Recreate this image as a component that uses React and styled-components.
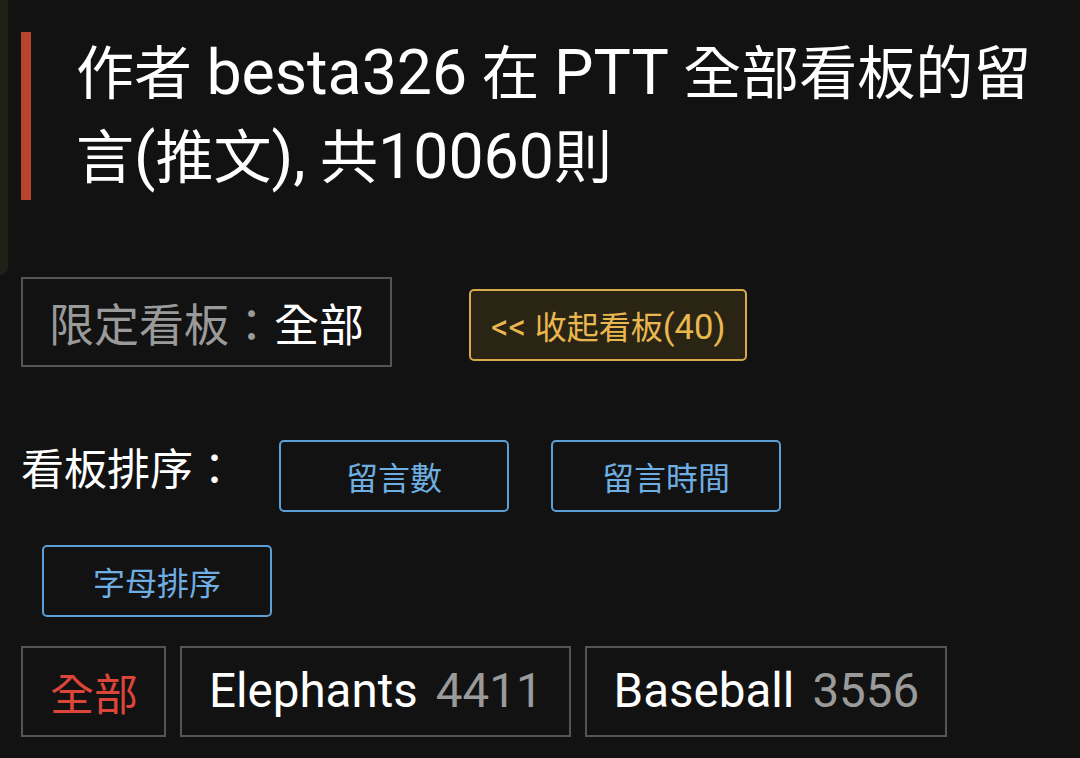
import React from 'react';
import styled, { createGlobalStyle } from 'styled-components';

const GlobalStyle = createGlobalStyle`
  html, body {
    margin: 0;
    padding: 0;
    background: #121212;
  }
  body {
    font-family: Roboto, "Noto Sans CJK TC", "Noto Sans", sans-serif;
    color: #fff;
  }
`;

const Page = styled.div`
  position: relative;
  min-height: 758px;
  padding: 32px 21px 0 21px;
  box-sizing: border-box;
`;

// drawer edge peeking in from the left
const DrawerEdge = styled.div`
  position: absolute;
  top: 0;
  left: 0;
  width: 8px;
  height: 275px;
  background: #202017;
  border-bottom-right-radius: 8px;
`;

// latin runs render a bit larger than the CJK glyphs next to them
const Latin = styled.span`
  font-size: 1.08em;
  line-height: 1;
`;

const Heading = styled.h1`
  margin: 0;
  border-left: 10px solid #b8452b;
  padding-left: 45px;
  font-size: 58px;
  font-weight: 400;
  line-height: 84px;
  color: #fff;
`;

const FilterRow = styled.div`
  display: flex;
  align-items: flex-start;
  gap: 77px;
  margin-top: 77px;
`;

const FilterBox = styled.div`
  display: flex;
  align-items: center;
  height: 90px;
  box-sizing: border-box;
  padding: 0 26px;
  border: 2px solid #555;
  font-size: 45px;
  color: #9a9a9a;
`;

const FilterValue = styled.span`
  color: #fff;
`;

const CollapseButton = styled.button`
  margin-top: 12px;
  height: 72px;
  padding: 0 20px;
  border: 2px solid #d9aa4b;
  border-radius: 5px;
  background: #2a2415;
  color: #e9b74f;
  font-family: inherit;
  font-size: 32px;
  cursor: pointer;
`;

const SortSection = styled.div`
  display: flex;
  flex-wrap: wrap;
  align-items: center;
  row-gap: 33px;
  margin-top: 73px;
`;

const SortLabel = styled.span`
  font-size: 43px;
  line-height: 1.2;
  color: #fff;
  margin: 0 22px 10px 0;
`;

const SortButton = styled.button`
  width: 230px;
  height: 72px;
  margin: 0 21px;
  border: 2px solid #5b9fd6;
  border-radius: 5px;
  background: transparent;
  color: #6eaee2;
  font-family: inherit;
  font-size: 32px;
  cursor: pointer;
`;

const Tabs = styled.div`
  display: flex;
  gap: 14px;
  margin-top: 29px;
`;

const Tab = styled.div`
  display: flex;
  align-items: center;
  height: 91px;
  box-sizing: border-box;
  padding: 0 26px 0 27px;
  border: 2px solid #555;
  font-size: 44px;
  color: ${({ active }) => (active ? '#dc453a' : '#fff')};
`;

const Count = styled(Latin)`
  margin-left: 18px;
  color: #9a9a9a;
`;

const boards = [
  { name: 'Elephants', count: 4411 },
  { name: 'Baseball', count: 3556 },
];

const App = () => (
  <Page>
    <GlobalStyle />
    <DrawerEdge />
    <Heading>
      作者 <Latin>besta326</Latin> 在 <Latin>PTT</Latin> 全部看板的留言<Latin>(</Latin>推文
      <Latin>),</Latin> 共<Latin>10060</Latin>則
    </Heading>

    <FilterRow>
      <FilterBox>
        限定看板：<FilterValue>全部</FilterValue>
      </FilterBox>
      <CollapseButton>
        <Latin>&lt;&lt; </Latin>收起看板<Latin>(40)</Latin>
      </CollapseButton>
    </FilterRow>

    <SortSection>
      <SortLabel>看板排序：</SortLabel>
      <SortButton>留言數</SortButton>
      <SortButton>留言時間</SortButton>
      <SortButton>字母排序</SortButton>
    </SortSection>

    <Tabs>
      <Tab active>全部</Tab>
      {boards.map((b) => (
        <Tab key={b.name}>
          <Latin>{b.name}</Latin>
          <Count>{b.count}</Count>
        </Tab>
      ))}
    </Tabs>
  </Page>
);

export default App;
